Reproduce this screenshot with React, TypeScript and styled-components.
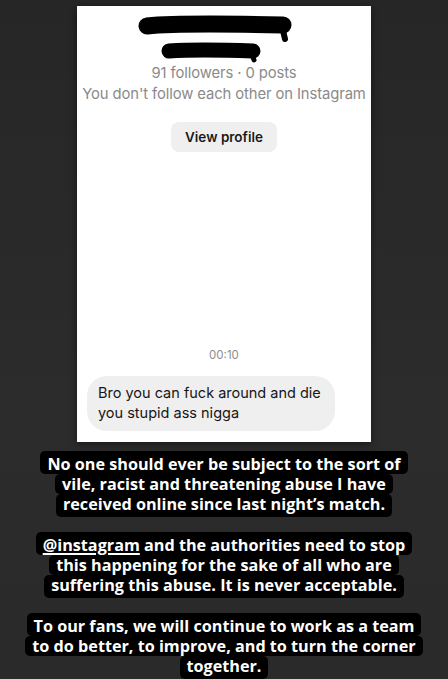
import React from "react";
import styled, { createGlobalStyle } from "styled-components";

const GlobalStyle = createGlobalStyle`
  html, body {
    margin: 0;
    padding: 0;
    background: #2a2a2a;
  }
  body {
    width: 448px;
    height: 679px;
    overflow: hidden;
  }
`;

const Story = styled.div`
  width: 448px;
  height: 679px;
  background: linear-gradient(180deg, #262626 0%, #2c2c2c 60%, #2a2a2a 100%);
  display: flex;
  flex-direction: column;
  align-items: center;
  overflow: hidden;
`;

const Card = styled.div`
  flex-shrink: 0;
  width: 294px;
  height: 436px;
  margin-top: 6px;
  background: #ffffff;
  box-shadow: 0 2px 8px rgba(0, 0, 0, 0.45);
  display: flex;
  flex-direction: column;
  align-items: center;
  font-family: Inter, "Liberation Sans", sans-serif;
`;

const Redaction = styled.svg`
  display: block;
  width: 294px;
  height: 49px;
  margin-top: 8px;
`;

const Meta = styled.div`
  font-size: 14.8px;
  line-height: 21px;
  color: #8a8a8a;
  text-align: center;
  white-space: nowrap;
  letter-spacing: -0.1px;
`;

const ProfileButton = styled.button`
  margin-top: 17px;
  width: 106px;
  height: 30px;
  border: none;
  border-radius: 8px;
  background: #efefef;
  color: #1a1a1a;
  font-family: Inter, "Liberation Sans", sans-serif;
  font-size: 13.5px;
  font-weight: 600;
`;

const Spacer = styled.div`
  flex: 1;
`;

const Time = styled.div`
  font-size: 11.5px;
  color: #8e8e8e;
  margin-bottom: 14px;
`;

const Bubble = styled.div`
  align-self: flex-start;
  margin: 0 0 11px 10px;
  width: 225px;
  padding: 7px 12px 8px 11px;
  background: #efefef;
  border-radius: 20px;
  color: #161616;
  font-size: 14.5px;
  line-height: 20px;
`;

const Captions = styled.div`
  flex-shrink: 0;
  display: flex;
  flex-direction: column;
  align-items: center;
  gap: 15px;
  margin-top: 9px;
  width: 440px;
`;

const Caption = styled.div`
  display: flex;
  flex-direction: column;
  align-items: center;
  font-family: "Open Sans", "Noto Sans", sans-serif;
  font-weight: 700;
  font-size: 16.2px;
  color: #ffffff;
`;

const Line = styled.div`
  background: #000000;
  padding: 0 7px;
  line-height: 20px;
  white-space: nowrap;
  border-radius: 5px;

  &:first-child {
    padding-top: 3px;
  }
  &:last-child {
    padding-bottom: 3px;
  }
`;

const Mention = styled.span`
  text-decoration: underline;
  text-underline-offset: 2px;
  text-decoration-thickness: 1.5px;
`;

export default function App() {
  return (
    <>
      <GlobalStyle />
      <Story>
        <Card>
          <Redaction viewBox="0 0 294 49">
            <path
              d="M70 12 C100 9 160 10 206 11"
              stroke="#000"
              strokeWidth="17"
              strokeLinecap="round"
              fill="none"
            />
            <path
              d="M204 8 L208 25"
              stroke="#000"
              strokeWidth="6"
              strokeLinecap="round"
            />
            <path
              d="M92 37 C120 35 150 36 176 37"
              stroke="#000"
              strokeWidth="15"
              strokeLinecap="round"
              fill="none"
            />
            <path
              d="M173 35 L177 46"
              stroke="#000"
              strokeWidth="5"
              strokeLinecap="round"
            />
          </Redaction>
          <Meta>91 followers · 0 posts</Meta>
          <Meta>You don't follow each other on Instagram</Meta>
          <ProfileButton>View profile</ProfileButton>
          <Spacer />
          <Time>00:10</Time>
          <Bubble>
            Bro you can fuck around and die you stupid ass nigga
          </Bubble>
        </Card>
        <Captions>
          <Caption>
            <Line>No one should ever be subject to the sort of</Line>
            <Line>vile, racist and threatening abuse I have</Line>
            <Line>received online since last night’s match.</Line>
          </Caption>
          <Caption>
            <Line>
              <Mention>@instagram</Mention> and the authorities need to stop
            </Line>
            <Line>this happening for the sake of all who are</Line>
            <Line>suffering this abuse. It is never acceptable.</Line>
          </Caption>
          <Caption>
            <Line>To our fans, we will continue to work as a team</Line>
            <Line>to do better, to improve, and to turn the corner</Line>
            <Line>together.</Line>
          </Caption>
        </Captions>
      </Story>
    </>
  );
}
